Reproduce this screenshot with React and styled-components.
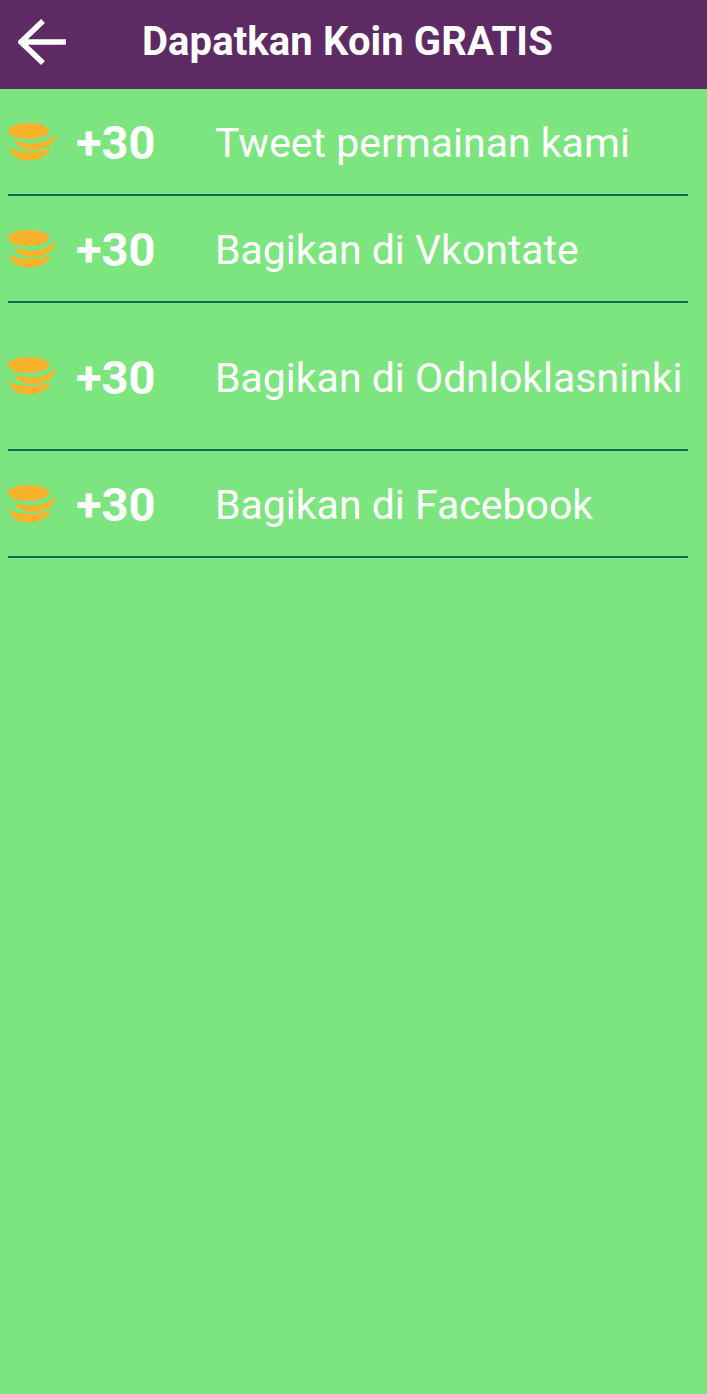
import React from "react"
import styled, { createGlobalStyle } from "styled-components"

const GlobalStyle = createGlobalStyle`
    html, body {
        margin: 0;
        padding: 0;
        background-color: #7de580;
    }
`

const Page = styled.div`
    width: 707px;
    height: 1394px;
    overflow: hidden;
    background-color: #7de580;
    font-family: Roboto, "Liberation Sans", sans-serif;
    color: #fff;
`

const Header = styled.header`
    height: 89px;
    display: flex;
    align-items: center;
    background-color: #5e2a63;
    padding: 0 0 5px 18px;
    box-sizing: border-box;
`

const BackIcon = styled.svg`
    width: 49px;
    height: 48px;
    flex-shrink: 0;
`

const Title = styled.h1`
    margin: 0 0 0 75px;
    font-size: 40px;
    font-weight: 700;
    letter-spacing: 0.1px;
    line-height: 1;
    white-space: nowrap;
`

const List = styled.ul`
    list-style: none;
    margin: 0;
    padding: 0 19px 0 8px;
`

const Row = styled.li`
    height: ${(props) => props.$height}px;
    display: flex;
    align-items: center;
    box-sizing: border-box;
    border-bottom: 2px solid #0b6b55;
`

const CoinIcon = styled.svg`
    width: 49px;
    height: 40px;
    flex-shrink: 0;
`

const Amount = styled.span`
    width: 139px;
    margin-left: 19px;
    padding-top: 2px;
    flex-shrink: 0;
    font-size: 47px;
    font-weight: 700;
    line-height: 1;
`

const Label = styled.span`
    padding-top: 4px;
    font-size: 41px;
    font-weight: 400;
    line-height: 1;
    white-space: nowrap;
`

const rewards = [
    { label: "Tweet permainan kami", height: 107 },
    { label: "Bagikan di Vkontate", height: 107 },
    { label: "Bagikan di Odnloklasninki", height: 148 },
    { label: "Bagikan di Facebook", height: 107 },
]

const Coins = () => (
    <CoinIcon viewBox="0 0 49 40">
        <ellipse cx="20.5" cy="9" rx="20.5" ry="8" fill="#f7b22c" />
        <path d="M48 12 C48.5 21 38 28 24 28 C16 28 9 25 6 18 C14 21.5 22 22 29 21 C37 20 44 17 48 12 Z" fill="#f7b22c" />
        <path d="M0.5 25 C5 28.5 12 29.8 21 29.8 C29 29.8 37 29 42.5 26.5 C41 34 31 38.5 21 38.5 C10 38.5 2 33.5 0.5 25 Z" fill="#f7b22c" />
    </CoinIcon>
)

const App = () => {
    return (
        <Page>
            <GlobalStyle />
            <Header>
                <BackIcon viewBox="0 0 49 48">
                    <path
                        d="M25 3 L3 24 L25 45 M3 24 H48"
                        fill="none"
                        stroke="#fff"
                        strokeWidth="5.5"
                    />
                </BackIcon>
                <Title>Dapatkan Koin GRATIS</Title>
            </Header>
            <List>
                {rewards.map((reward) => (
                    <Row key={reward.label} $height={reward.height}>
                        <Coins />
                        <Amount>+30</Amount>
                        <Label>{reward.label}</Label>
                    </Row>
                ))}
            </List>
        </Page>
    )
}

export default App
